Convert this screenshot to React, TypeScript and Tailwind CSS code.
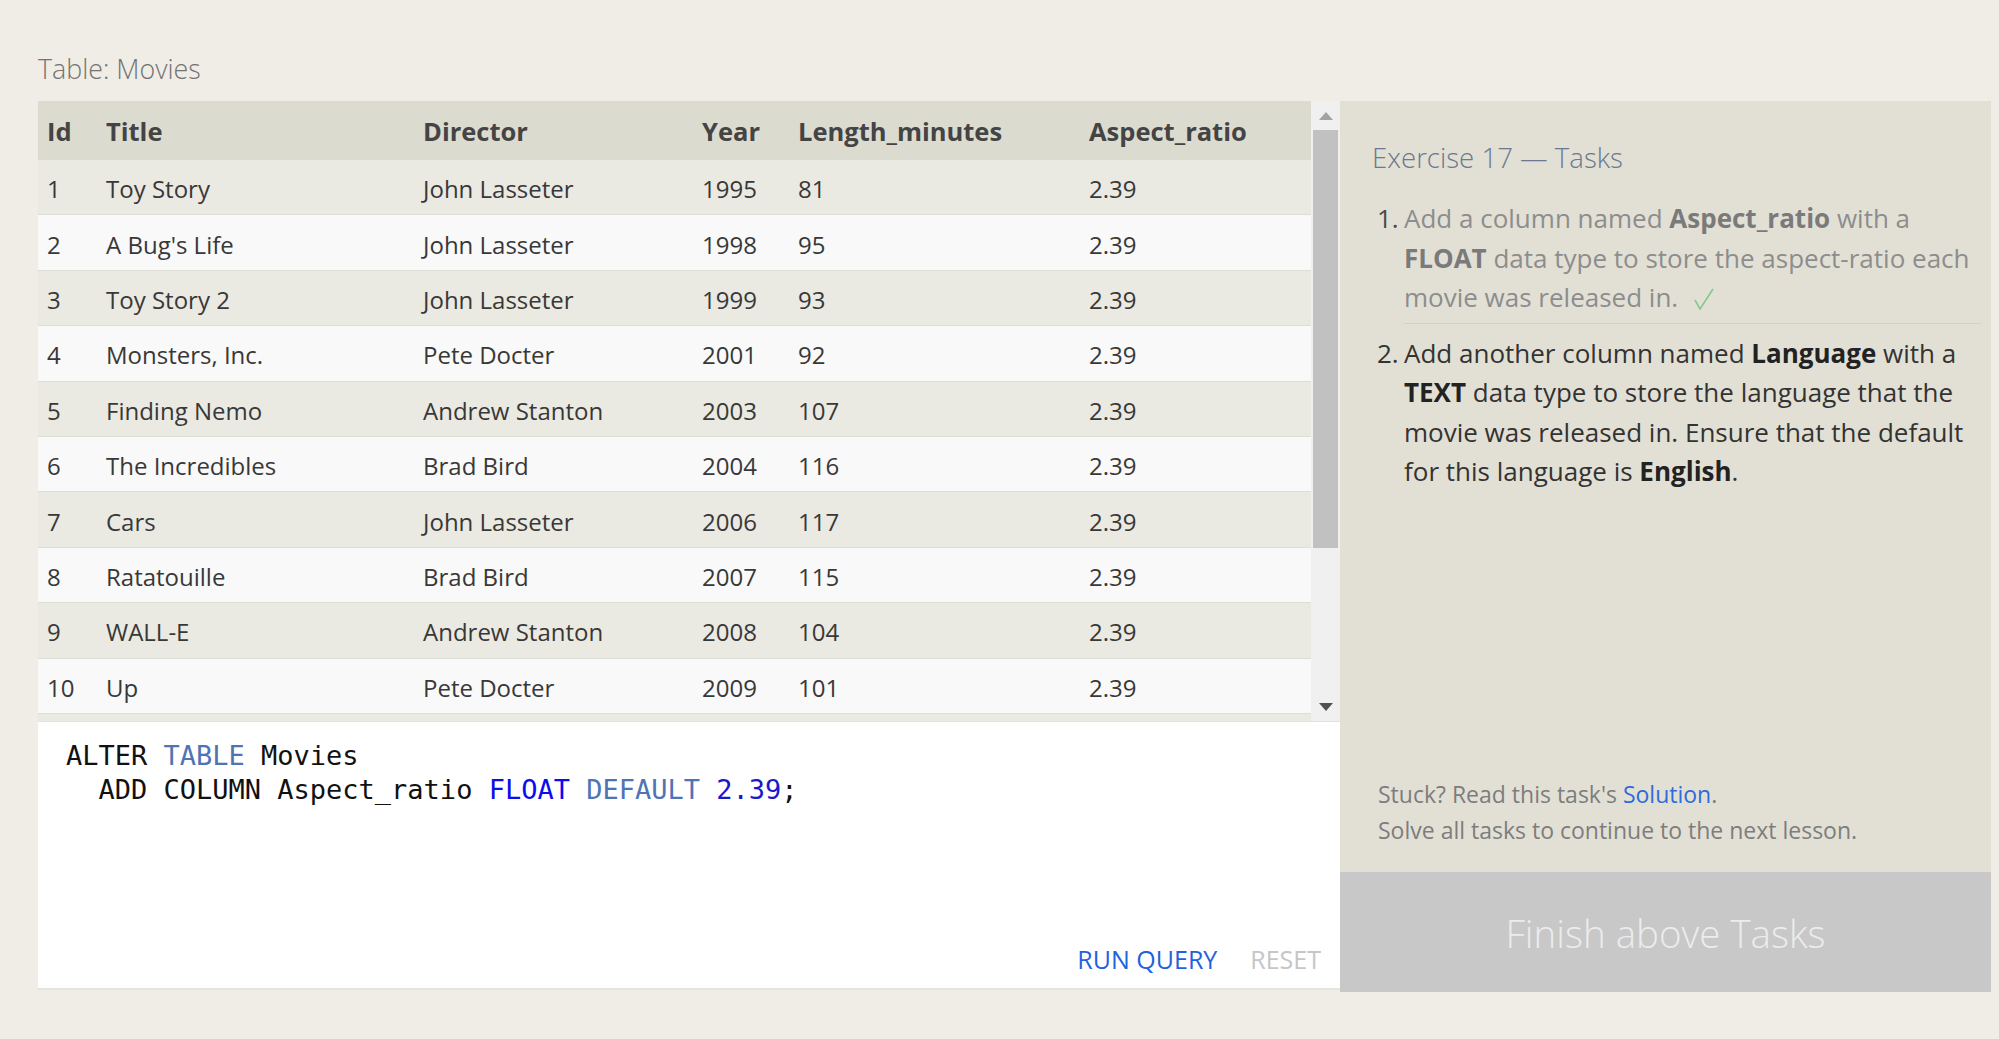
import React from "react";

const rows: [string, string, string, string, string, string][] = [
  ["1", "Toy Story", "John Lasseter", "1995", "81", "2.39"],
  ["2", "A Bug's Life", "John Lasseter", "1998", "95", "2.39"],
  ["3", "Toy Story 2", "John Lasseter", "1999", "93", "2.39"],
  ["4", "Monsters, Inc.", "Pete Docter", "2001", "92", "2.39"],
  ["5", "Finding Nemo", "Andrew Stanton", "2003", "107", "2.39"],
  ["6", "The Incredibles", "Brad Bird", "2004", "116", "2.39"],
  ["7", "Cars", "John Lasseter", "2006", "117", "2.39"],
  ["8", "Ratatouille", "Brad Bird", "2007", "115", "2.39"],
  ["9", "WALL-E", "Andrew Stanton", "2008", "104", "2.39"],
  ["10", "Up", "Pete Docter", "2009", "101", "2.39"],
  ["11", "Toy Story 3", "Lee Unkrich", "2010", "103", "2.39"],
  ["12", "Cars 2", "John Lasseter", "2011", "120", "2.39"],
];

const headers = ["Id", "Title", "Director", "Year", "Length_minutes", "Aspect_ratio"];

function Scrollbar() {
  return (
    <div className="flex w-[29px] shrink-0 flex-col bg-[#f0f0f0]">
      <div className="flex h-[29px] items-center justify-center">
        <svg width="14" height="8" viewBox="0 0 14 8">
          <polygon points="7,0 14,8 0,8" fill="#a3a3a3" />
        </svg>
      </div>
      <div className="mx-[2px] h-[418px] bg-[#c1c1c1]" />
      <div className="flex-1" />
      <div className="flex h-[29px] items-center justify-center">
        <svg width="14" height="8" viewBox="0 0 14 8">
          <polygon points="0,0 14,0 7,8" fill="#505050" />
        </svg>
      </div>
    </div>
  );
}

function DataTable() {
  return (
    <div className="flex h-[621px] border-b border-[#e2e2e2]">
      <div className="min-w-0 flex-1 overflow-hidden">
        <div className="grid h-[59px] grid-cols-[59px_317px_279px_96px_291px_1fr] items-center bg-[#dcdbd0] text-[25.5px] font-bold text-[#444444]">
          {headers.map((h) => (
            <div key={h} className="pl-[9px] pt-[2px]">
              {h}
            </div>
          ))}
        </div>
        {rows.map((r, i) => (
          <div
            key={r[0]}
            className={
              "grid h-[55.4px] grid-cols-[59px_317px_279px_96px_291px_1fr] items-center border-b border-[#deddd6] text-[24px] text-[#383838] " +
              (i % 2 === 0 ? "bg-[#eae9e2]" : "bg-[#f9f9f9]")
            }
          >
            {r.map((c, j) => (
              <div key={j} className="pl-[9px] pt-[4px]">
                {c}
              </div>
            ))}
          </div>
        ))}
      </div>
      <Scrollbar />
    </div>
  );
}

function Editor() {
  return (
    <div className="flex h-[268px] flex-col border-b-2 border-[#e6e4de] bg-white">
      <div
        className="whitespace-pre pl-[28px] pt-[17px] text-[27px] leading-[34px] text-[#111111]"
        style={{ fontFamily: '"DejaVu Sans Mono", "Liberation Mono", monospace' }}
      >
        <div>
          ALTER <span className="text-[#4f74b6]">TABLE</span> Movies
        </div>
        <div>
          {"  ADD COLUMN Aspect_ratio "}
          <span className="text-[#0c0cf0]">FLOAT</span>{" "}
          <span className="text-[#4f74b6]">DEFAULT</span>{" "}
          <span className="text-[#1818cc]">2.39</span>;
        </div>
      </div>
      <div className="mt-auto flex justify-end gap-[33px] pb-[13px] pr-[19px] text-[25px] leading-[32px]">
        <span className="text-[#1f62e0]">RUN QUERY</span>
        <span className="text-[#c6c6c6]">RESET</span>
      </div>
    </div>
  );
}

function Check() {
  return (
    <svg className="ml-[16px] inline-block align-[-3px]" width="20" height="22" viewBox="0 0 20 22">
      <polyline points="1,12 6,21 19,1" fill="none" stroke="#86c98a" strokeWidth="1.6" />
    </svg>
  );
}

function TaskPanel() {
  return (
    <div className="flex h-[891px] flex-1 flex-col bg-[#e2e0d5]">
      <div className="flex-1 pl-[32px] pr-[10px] pt-[38px]">
        <div className="text-[27.6px] font-light leading-[36px] text-[#6b7890]">Exercise 17 — Tasks</div>
        <div className="mt-[24px] pl-[5px] text-[26px] leading-[39.5px]">
          <div className="flex">
            <div className="w-[27px] shrink-0 text-[#4a4a4a]">1.</div>
            <div className="flex-1 border-b border-[#d3d1c6] pb-[5px] text-[#8d8d8d]">
              Add a column named <b className="font-bold text-[#7a7a7a]">Aspect_ratio</b> with a{" "}
              <b className="font-bold text-[#7a7a7a]">FLOAT</b> data type to store the aspect-ratio each movie was
              released in.
              <Check />
            </div>
          </div>
          <div className="flex pt-[10px]">
            <div className="w-[27px] shrink-0 text-[#333333]">2.</div>
            <div className="flex-1 text-[#333333]">
              Add another column named <b className="font-bold text-[#222222]">Language</b> with a{" "}
              <b className="font-bold text-[#222222]">TEXT</b> data type to store the language that the movie was
              released in. Ensure that the default for this language is{" "}
              <b className="font-bold text-[#222222]">English</b>.
            </div>
          </div>
        </div>
      </div>
      <div className="pb-[24px] pl-[38px] text-[23px] leading-[36px] text-[#7d7d7d]">
        <div>
          Stuck? Read this task's <span className="text-[#2f6bdc]">Solution</span>.
        </div>
        <div>Solve all tasks to continue to the next lesson.</div>
      </div>
      <div className="flex h-[120px] items-center justify-center bg-[#c8c8c8] pt-[4px] text-[38.5px] font-light text-[#ececec]">
        Finish above Tasks
      </div>
    </div>
  );
}

export default function App() {
  return (
    <div
      className="min-h-screen w-full bg-[#f0ede6] pl-[38px] pr-[8px] pt-[51px]"
      style={{ fontFamily: '"Open Sans", "Noto Sans", sans-serif' }}
    >
      <div className="mb-[14px] text-[26.8px] font-light leading-[36px] text-[#737373]">Table: Movies</div>
      <div className="flex items-start">
        <div className="w-[1302px] shrink-0">
          <DataTable />
          <Editor />
        </div>
        <TaskPanel />
      </div>
    </div>
  );
}
